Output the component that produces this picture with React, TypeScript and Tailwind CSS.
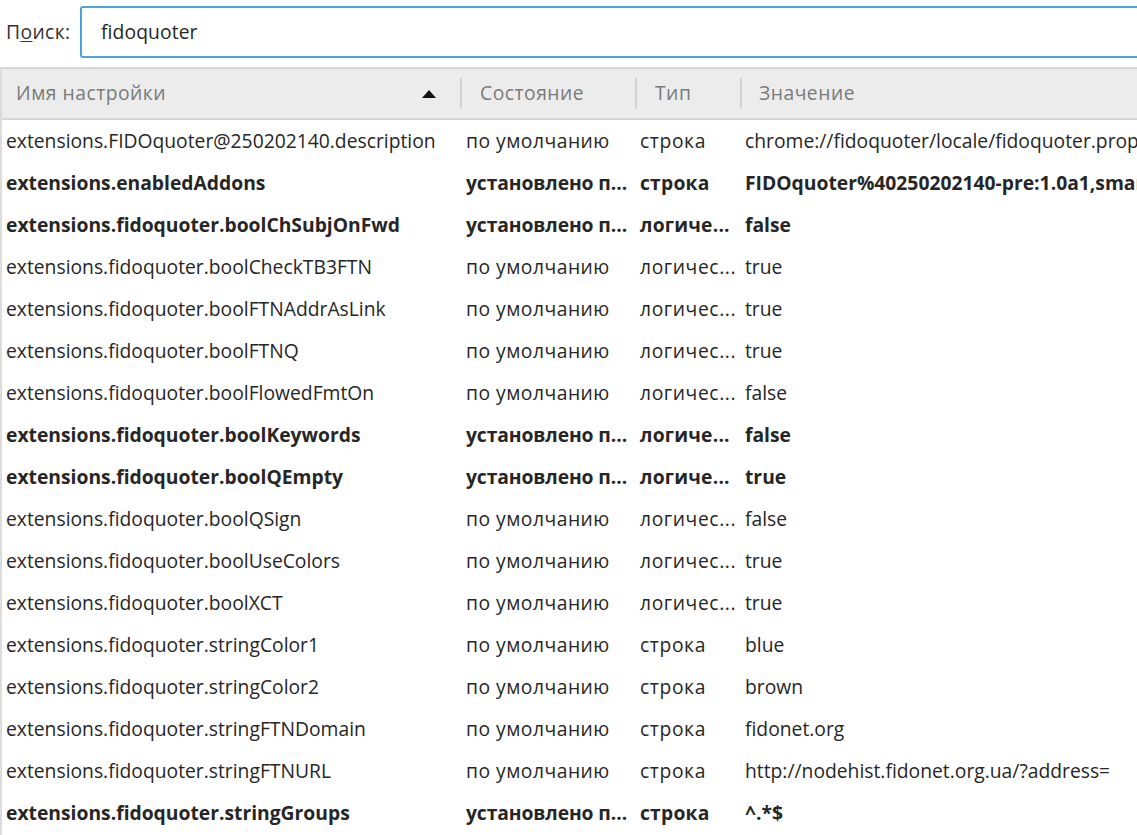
import React from "react";

type Row = { name: string; state: string; type: string; value: string; bold?: boolean };

const D = "по умолчанию";
const S = "установлено п...";
const rows: Row[] = [
  { name: "extensions.FIDOquoter@250202140.description", state: D, type: "строка", value: "chrome://fidoquoter/locale/fidoquoter.properties" },
  { name: "extensions.enabledAddons", state: S, type: "строка", value: "FIDOquoter%40250202140-pre:1.0a1,smart-templates", bold: true },
  { name: "extensions.fidoquoter.boolChSubjOnFwd", state: S, type: "логиче...", value: "false", bold: true },
  { name: "extensions.fidoquoter.boolCheckTB3FTN", state: D, type: "логичес...", value: "true" },
  { name: "extensions.fidoquoter.boolFTNAddrAsLink", state: D, type: "логичес...", value: "true" },
  { name: "extensions.fidoquoter.boolFTNQ", state: D, type: "логичес...", value: "true" },
  { name: "extensions.fidoquoter.boolFlowedFmtOn", state: D, type: "логичес...", value: "false" },
  { name: "extensions.fidoquoter.boolKeywords", state: S, type: "логиче...", value: "false", bold: true },
  { name: "extensions.fidoquoter.boolQEmpty", state: S, type: "логиче...", value: "true", bold: true },
  { name: "extensions.fidoquoter.boolQSign", state: D, type: "логичес...", value: "false" },
  { name: "extensions.fidoquoter.boolUseColors", state: D, type: "логичес...", value: "true" },
  { name: "extensions.fidoquoter.boolXCT", state: D, type: "логичес...", value: "true" },
  { name: "extensions.fidoquoter.stringColor1", state: D, type: "строка", value: "blue" },
  { name: "extensions.fidoquoter.stringColor2", state: D, type: "строка", value: "brown" },
  { name: "extensions.fidoquoter.stringFTNDomain", state: D, type: "строка", value: "fidonet.org" },
  { name: "extensions.fidoquoter.stringFTNURL", state: D, type: "строка", value: "http://nodehist.fidonet.org.ua/?address=" },
  { name: "extensions.fidoquoter.stringGroups", state: S, type: "строка", value: "^.*$", bold: true },
];

export default function App() {
  return (
    <div
      className="w-[1137px] h-[835px] overflow-hidden bg-white text-[#262626] text-[19.3px]"
      style={{ fontFamily: '"Open Sans", "Noto Sans", sans-serif' }}
    >
      <div className="h-[62px] flex items-center pl-[6px] pt-[2px]">
        <span className="text-[#333] w-[74px] tracking-[0.4px]">
          П<span className="underline underline-offset-2">о</span>иск:
        </span>
        <div className="flex-1 h-[52px] border-2 border-[#4aa3df] rounded-[3px] -mr-[4px] flex items-center pl-[19px] tracking-[0.1px]">
          fidoquoter
        </div>
      </div>
      <div className="border-l-2 border-[#dcdcdc] h-full">
        <div className="h-[53px] mt-[5px] bg-[#ececec] border-t-2 border-b-2 border-[#d6d6d6] flex items-center text-[#7a7a7a] tracking-[0.5px]">
          <div className="w-[460px] flex items-center pl-[14px] pr-[24px] border-r-2 border-[#d2d2d2] h-[31px]">
            <span className="flex-1">Имя настройки</span>
            <svg width="14" height="8" viewBox="0 0 14 8">
              <path d="M7 0 L14 8 L0 8 Z" fill="#111" />
            </svg>
          </div>
          <div className="w-[175px] pl-[18px] border-r-2 border-[#d2d2d2] h-[31px] flex items-center">Состояние</div>
          <div className="w-[105px] pl-[18px] border-r-2 border-[#d2d2d2] h-[31px] flex items-center">Тип</div>
          <div className="flex-1 pl-[17px] h-[31px] flex items-center">Значение</div>
        </div>
        {rows.map((r, i) =>
          r.bold ? (
            <div key={i} className="h-[42px] flex items-center whitespace-nowrap font-bold">
              <div className="w-[462px] pl-[4px] overflow-hidden">{r.name}</div>
              <div className="w-[175px] pl-[2px] overflow-hidden tracking-[-0.1px]">{r.state}</div>
              <div className="w-[105px] pl-[1px] overflow-hidden tracking-[0.2px]">{r.type}</div>
              <div className="flex-1 pl-[1px] overflow-hidden">{r.value}</div>
            </div>
          ) : (
            <div key={i} className="h-[42px] flex items-center whitespace-nowrap">
              <div className="w-[462px] pl-[4px] overflow-hidden">{r.name}</div>
              <div className="w-[175px] pl-[2px] overflow-hidden tracking-[0.5px]">{r.state}</div>
              <div className="w-[105px] pl-[1px] overflow-hidden tracking-[0.6px]">{r.type}</div>
              <div className="flex-1 pl-[1px] overflow-hidden">{r.value}</div>
            </div>
          )
        )}
      </div>
    </div>
  );
}
